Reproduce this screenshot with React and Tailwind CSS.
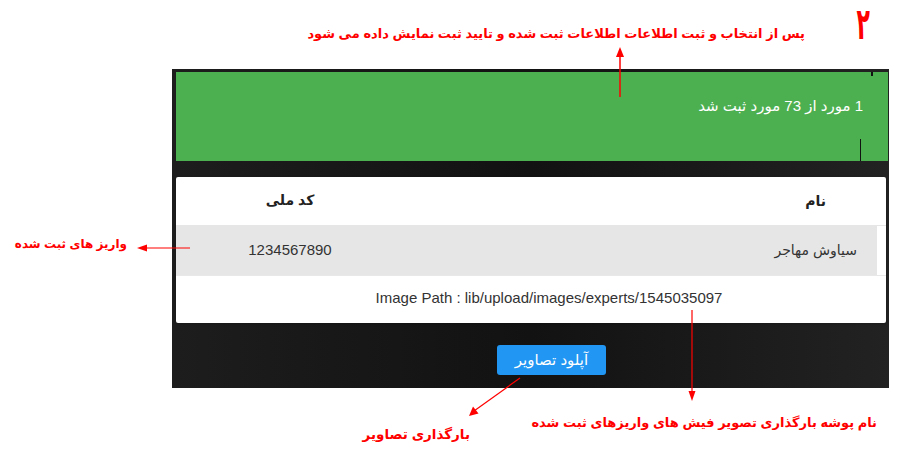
import React from "react";

const font = { fontFamily: '"Liberation Sans", "DejaVu Sans", sans-serif' };

// Red callout text that sits over the screenshot
function Note({ className, children }) {
    return (
        <p dir="rtl" className={"absolute font-bold text-[#ff0000] whitespace-nowrap leading-none " + className}>
            {children}
        </p>
    )
}

function Arrows() {
    return (
        <svg className="absolute inset-0 pointer-events-none" width="909" height="461" viewBox="0 0 909 461">
            {/* up arrow to the green alert */}
            <line x1="620" y1="97" x2="620" y2="54" stroke="#ff0000" strokeWidth="1.5" />
            <polygon points="620,47 616,57 624,57" fill="#ff0000" />
            {/* left arrow to row */}
            <line x1="190" y1="248" x2="144" y2="248" stroke="#ff0000" strokeWidth="1.2" />
            <polygon points="137,248 147,244.5 147,251.5" fill="#ff0000" />
            {/* down arrow from image path */}
            <line x1="692" y1="310" x2="692" y2="394" stroke="#ff0000" strokeWidth="1.2" />
            <polygon points="692,401 688.5,391 695.5,391" fill="#ff0000" />
            {/* diagonal arrow from upload button */}
            <line x1="520" y1="378" x2="474" y2="411" stroke="#ff0000" strokeWidth="1.2" />
            <polygon points="469,416 473,406.5 478.5,413.5" fill="#ff0000" />
            {/* small dark marks on the alert */}
            <line x1="860.5" y1="139" x2="860.5" y2="161" stroke="#111" strokeWidth="1" />
            <rect x="871" y="72" width="2" height="4" fill="#111" />
        </svg>
    )
}

export default function App() {
    return (
        <div className="relative w-[909px] h-[461px] bg-white overflow-hidden" style={font}>
            <div className="h-[69px]"></div>

            <div className="ml-[172px] w-[717px] h-[319px] pt-[3px] pl-[4px] bg-linear-to-r from-[#1d1d1d] via-[#121212] to-[#222222] flex flex-col">
                <div dir="rtl" className="h-[89px] mr-[1px] bg-[#4caf50] flex items-center pr-[25px]">
                    <p className="text-white text-[15px] -mt-[20px]">1 مورد از 73 مورد ثبت شد</p>
                </div>

                <div className="mt-[16px] w-[710px] h-[146px] bg-white rounded-[2px] flex flex-col shadow-sm">
                    <div dir="rtl" className="h-[49px] flex items-center border-b border-[#e6e6e6]">
                        <div className="flex-1 pr-[60px] font-bold text-[14px] text-[#222]">نام</div>
                        <div className="w-[228px] text-center font-bold text-[14px] text-[#222] -mt-[2px]">کد ملی</div>
                    </div>
                    <div dir="rtl" className="h-[49px] mr-[9px] bg-[#e6e6e6] flex items-center">
                        <div className="flex-1 pr-[20px] text-[14px] text-[#333]">سیاوش مهاجر</div>
                        <div className="w-[228px] text-center text-[15px] text-[#333]">1234567890</div>
                    </div>
                    <div className="flex-1 flex items-center justify-center border-t border-[#e8e8e8] pl-[36px] pb-[2px]">
                        <p className="text-[15px] text-[#333]">Image Path : lib/upload/images/experts/1545035097</p>
                    </div>
                </div>

                <div className="mt-[22px] flex justify-center pl-[38px]">
                    <button className="w-[109px] h-[30px] rounded-[3px] bg-[#2196f3] text-white text-[15px]">آپلود تصاویر</button>
                </div>
            </div>

            <p className="absolute right-[39px] top-[2px] text-[44px] font-bold text-[#ff0000] leading-none origin-right scale-x-[0.5]">۲</p>
            <Note className="right-[104px] top-[27px] text-[13px]">پس از انتخاب و ثبت اطلاعات اطلاعات ثبت شده و تایید ثبت نمایش داده می شود</Note>
            <Note className="right-[782px] top-[238px] text-[12px]">واریز های ثبت شده</Note>
            <Note className="right-[439px] top-[428px] text-[13.5px]">بارگذاری تصاویر</Note>
            <Note className="right-[32px] top-[416px] text-[13px]">نام پوشه بارگذاری تصویر فیش های واریزهای ثبت شده</Note>

            <Arrows />
        </div>
    )
}
